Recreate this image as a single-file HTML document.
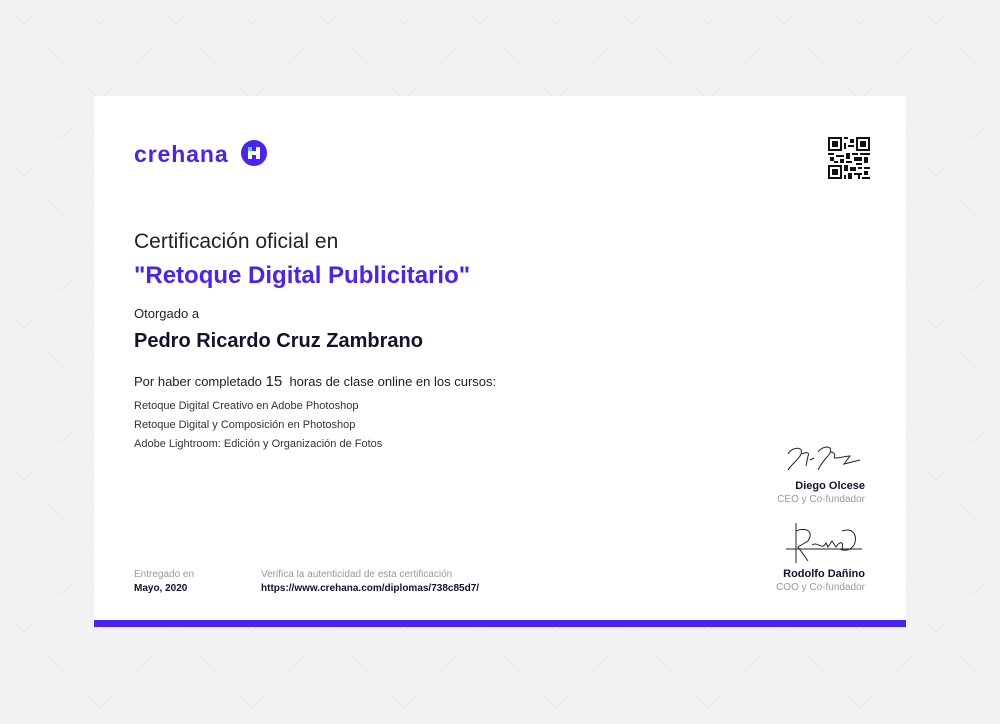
<!DOCTYPE html><html><head><style>
body{margin:0;width:1000px;height:724px;background:#f2f2f2;position:relative;overflow:hidden;font-family:"Liberation Sans",sans-serif;color:#1a1a33}
.bg{position:absolute;inset:0}
.card{position:absolute;left:94px;top:96px;width:812px;height:531px;background:#fff}
.bar{position:absolute;left:0;bottom:0;width:812px;height:7px;background:#4b22f4}
.t{position:absolute;white-space:nowrap}
</style></head><body>
<svg class="bg" width="1000" height="724"><defs><pattern id="p" width="76" height="76" patternUnits="userSpaceOnUse"><path d="M10 10l14 14 14-14M48 48l14 14 14-14M50 20l14-14M14 52l14 14" stroke="#ebebeb" stroke-width="1" fill="none"/></pattern></defs><rect width="1000" height="724" fill="url(#p)"/></svg>
<div class="card">
<div class="t" style="left:40px;top:45px;font-size:23px;font-weight:bold;color:#4b22f4;letter-spacing:0.9px">crehana</div>
<svg class="t" style="left:147px;top:44px" width="26" height="26"><circle cx="13" cy="13" r="13" fill="#4b22f4"/><rect x="7" y="7" width="4" height="4" fill="#3ee0f0"/><rect x="7" y="11" width="4" height="8" fill="#fff"/><rect x="11" y="11" width="4" height="4" fill="#fff"/><rect x="15" y="7" width="4" height="12" fill="#fff"/></svg>
<svg class="t" style="left:734px;top:41px" width="42" height="42" viewBox="0 0 21 21" shape-rendering="crispEdges"><g fill="#111"><path d="M0 0h7v7H0zM14 0h7v7h-7zM0 14h7v7H0z"/></g><g fill="#fff"><path d="M1 1h5v5H1zM15 1h5v5h-5zM1 15h5v5H1z"/></g><g fill="#111"><path d="M2 2h3v3H2zM16 2h3v3h-3zM2 16h3v3H2zM8 0h2v1H8zM11 1h2v2h-2zM8 3h1v3H8zM10 4h3v1h-3zM0 8h3v1H0zM4 9h4v1H4zM9 8h2v3H9zM12 8h3v1h-3zM16 8h5v1h-5zM1 10h2v2H1zM6 11h2v2H6zM13 10h4v2h-4zM18 10h2v3h-2zM9 12h3v1H9zM3 12h2v1H3zM14 13h3v1h-3zM8 14h2v3H8zM11 15h3v2h-3zM15 15h2v1h-2zM18 15h3v1h-3zM10 18h2v3h-2zM13 18h4v1h-4zM15 19h1v2h-1zM18 17h2v2h-2zM17 20h4v1h-4zM8 19h1v2H8z"/></g></svg>
<div class="t" style="left:40px;top:134px;font-size:21px;font-weight:300;color:#222">Certificación oficial en</div>
<div class="t" style="left:40px;top:166px;font-size:24px;font-weight:bold;color:#4b22f4">"Retoque Digital Publicitario"</div>
<div class="t" style="left:40px;top:210px;font-size:13px;color:#222">Otorgado a</div>
<div class="t" style="left:40px;top:234px;font-size:20px;font-weight:bold;color:#12122e">Pedro Ricardo Cruz Zambrano</div>
<div class="t" style="left:40px;top:277px;font-size:13px;color:#222">Por haber completado <span style="font-size:15px">15</span>&nbsp; horas de clase online en los cursos:</div>
<div class="t" style="left:40px;top:304px;font-size:11px;color:#333">Retoque Digital Creativo en Adobe Photoshop</div>
<div class="t" style="left:40px;top:323px;font-size:11px;color:#333">Retoque Digital y Composición en Photoshop</div>
<div class="t" style="left:40px;top:342px;font-size:11px;color:#333">Adobe Lightroom: Edición y Organización de Fotos</div>
<div class="t" style="left:40px;top:473px;font-size:10px;color:#999">Entregado en</div>
<div class="t" style="left:40px;top:487px;font-size:10px;font-weight:bold;color:#12122e">Mayo, 2020</div>
<div class="t" style="left:167px;top:473px;font-size:10px;color:#999">Verifica la autenticidad de esta certificación</div>
<div class="t" style="left:167px;top:487px;font-size:10px;font-weight:bold;color:#12122e">https://www.crehana.com/diplomas/738c85d7/</div>
<svg class="t" style="left:686px;top:340px" width="90" height="40"><path d="M8 18c4-8 18-8 12 2-4 6-10 10-12 14M22 18c4-2 8-2 6 2l-2 10M30 24l4-2M38 16c6-8 18-6 10 4-4 4-8 10-10 14M50 16c4 0 6 2 4 6M54 22c6 0 12-2 16-2l-6 8 16-4" stroke="#222" fill="none" stroke-width="1"/></svg>
<div class="t" style="right:41px;top:384px;font-size:11px;font-weight:bold;color:#12122e">Diego Olcese</div>
<div class="t" style="right:41px;top:398px;font-size:10px;color:#999">CEO y Co-fundador</div>
<svg class="t" style="left:690px;top:425px" width="80" height="45"><path d="M12 2v40M12 10c10-4 18 0 12 10l-10 6 10 14M2 28h76M28 24c6-4 10 6 14-2l2 4 4-6 4 6c4-6 8-6 6 2M58 10c12-4 16 6 12 14-4 6-10 6-14 4" stroke="#222" fill="none" stroke-width="1"/></svg>
<div class="t" style="right:41px;top:472px;font-size:11px;font-weight:bold;color:#12122e">Rodolfo Dañino</div>
<div class="t" style="right:41px;top:486px;font-size:10px;color:#999">COO y Co-fundador</div>
<div class="bar"></div>
</div>
</body></html>
